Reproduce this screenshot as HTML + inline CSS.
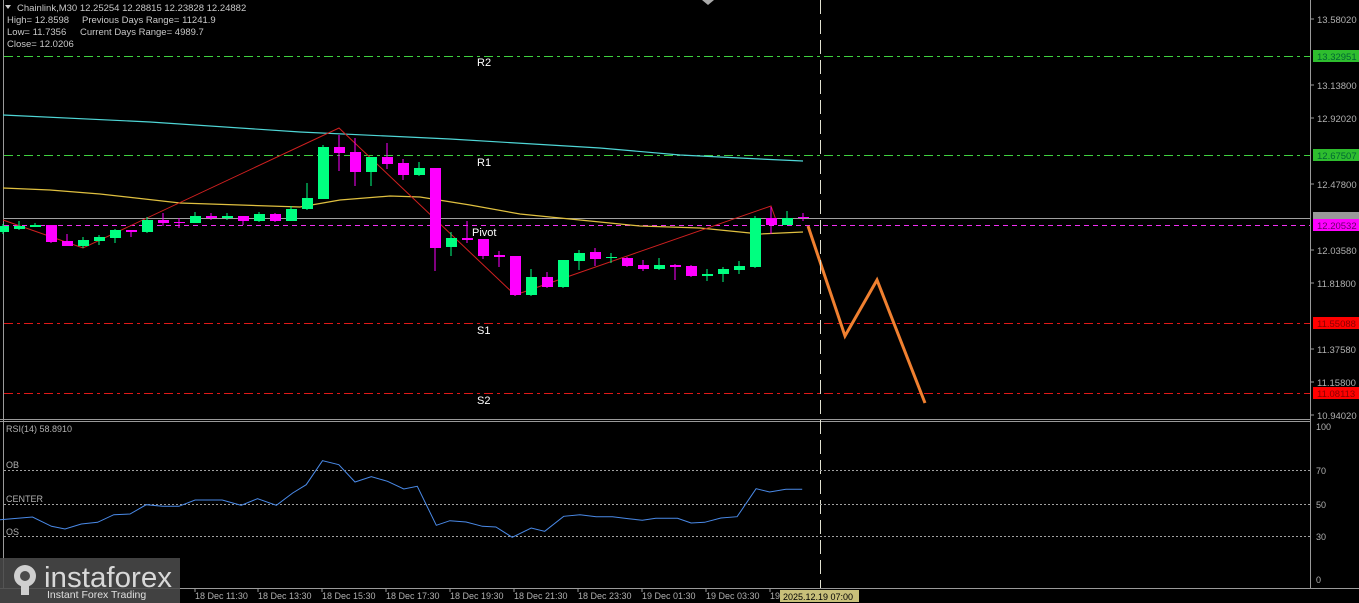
<!DOCTYPE html>
<html><head><meta charset="utf-8"><style>
html,body{margin:0;padding:0;background:#000;width:1359px;height:603px;overflow:hidden}
svg{display:block;font-family:"Liberation Sans",sans-serif}
</style></head><body>
<svg width="1359" height="603" viewBox="0 0 1359 603">
<rect width="1359" height="603" fill="#000"/>
<g shape-rendering="crispEdges">
<line x1="3.5" y1="0" x2="3.5" y2="588" stroke="#9a9a9a"/>
<line x1="1310.5" y1="0" x2="1310.5" y2="588" stroke="#9a9a9a"/>
<line x1="0" y1="419.5" x2="1310" y2="419.5" stroke="#9a9a9a"/>
<line x1="0" y1="421.5" x2="1310" y2="421.5" stroke="#9a9a9a"/>
<line x1="0" y1="588.5" x2="1359" y2="588.5" stroke="#9a9a9a"/>
<line x1="4" y1="56.5" x2="1310" y2="56.5" stroke="#3fd03f" stroke-dasharray="9,4,3,4"/>
<line x1="4" y1="155.5" x2="1310" y2="155.5" stroke="#3fd03f" stroke-dasharray="9,4,3,4"/>
<line x1="4" y1="218.5" x2="1310" y2="218.5" stroke="#a0a0a0"/>
<line x1="4" y1="225.5" x2="1310" y2="225.5" stroke="#f030f0" stroke-dasharray="5,4"/>
<line x1="4" y1="323.5" x2="1310" y2="323.5" stroke="#e01818" stroke-dasharray="9,4,3,4"/>
<line x1="4" y1="393.5" x2="1310" y2="393.5" stroke="#e01818" stroke-dasharray="9,4,3,4"/>
</g>
<g fill="#fff" font-size="11">
<text x="477" y="66">R2</text><text x="477" y="166">R1</text><text x="472" y="236">Pivot</text>
<text x="477" y="334">S1</text><text x="477" y="404">S2</text>
</g>
<polyline fill="none" stroke="#4fd6d6" stroke-width="1.2" points="3,115 150,122 300,132 450,139 600,148 680,155 760,159 803,161"/>
<polyline fill="none" stroke="#e0c040" stroke-width="1.2" points="3,188 50,190 100,194 180,203 300,207 340,200 390,196 420,197 470,205 520,214 560,218 640,226 700,228 760,234 803,232"/>
<polyline fill="none" stroke="#d02020" stroke-width="1" points="3,220 83,248 339,128 515,295 771,206 776,220"/>
<g stroke="#00ff80" stroke-width="1" shape-rendering="crispEdges">
<line x1="3" y1="224" x2="3" y2="234"/><line x1="19" y1="221" x2="19" y2="230"/><line x1="35" y1="223" x2="35" y2="227"/>
<line x1="83" y1="237" x2="83" y2="248"/><line x1="99" y1="235" x2="99" y2="245"/><line x1="115" y1="229" x2="115" y2="243"/>
<line x1="147" y1="217" x2="147" y2="233"/><line x1="195" y1="212" x2="195" y2="223"/><line x1="227" y1="213" x2="227" y2="220"/>
<line x1="259" y1="212" x2="259" y2="222"/><line x1="291" y1="206" x2="291" y2="221"/><line x1="307" y1="183" x2="307" y2="210"/>
<line x1="323" y1="145" x2="323" y2="199"/><line x1="371" y1="157" x2="371" y2="186"/><line x1="419" y1="162" x2="419" y2="176"/>
<line x1="451" y1="232" x2="451" y2="256"/><line x1="531" y1="269" x2="531" y2="296"/><line x1="563" y1="260" x2="563" y2="288"/>
<line x1="579" y1="250" x2="579" y2="270"/><line x1="611" y1="253" x2="611" y2="263"/><line x1="659" y1="258" x2="659" y2="270"/>
<line x1="707" y1="269" x2="707" y2="281"/><line x1="723" y1="267" x2="723" y2="282"/><line x1="739" y1="261" x2="739" y2="274"/>
<line x1="755" y1="216" x2="755" y2="268"/><line x1="787" y1="211" x2="787" y2="225"/>
</g>
<g stroke="#ff00ff" stroke-width="1" shape-rendering="crispEdges">
<line x1="51" y1="225" x2="51" y2="243"/><line x1="67" y1="234" x2="67" y2="246"/><line x1="131" y1="230" x2="131" y2="237"/>
<line x1="163" y1="213" x2="163" y2="226"/><line x1="179" y1="218" x2="179" y2="228"/><line x1="211" y1="213" x2="211" y2="220"/>
<line x1="243" y1="216" x2="243" y2="225"/><line x1="275" y1="213" x2="275" y2="222"/><line x1="339" y1="135" x2="339" y2="171"/>
<line x1="355" y1="138" x2="355" y2="186"/><line x1="387" y1="143" x2="387" y2="169"/><line x1="403" y1="159" x2="403" y2="180"/>
<line x1="435" y1="168" x2="435" y2="271"/><line x1="467" y1="221" x2="467" y2="243"/><line x1="483" y1="239" x2="483" y2="259"/>
<line x1="499" y1="251" x2="499" y2="267"/><line x1="515" y1="256" x2="515" y2="296"/><line x1="547" y1="272" x2="547" y2="288"/>
<line x1="595" y1="248" x2="595" y2="266"/><line x1="627" y1="257" x2="627" y2="267"/><line x1="643" y1="260" x2="643" y2="271"/>
<line x1="675" y1="264" x2="675" y2="280"/><line x1="691" y1="265" x2="691" y2="277"/><line x1="771" y1="207" x2="771" y2="234"/>
<line x1="803" y1="213" x2="803" y2="221"/>
</g>
<g fill="#00ff80">
<rect x="0" y="226" width="9" height="6"/><rect x="14" y="226" width="11" height="3"/><rect x="30" y="225" width="11" height="2"/>
<rect x="78" y="240" width="11" height="6"/><rect x="94" y="237" width="11" height="4"/><rect x="110" y="230" width="11" height="8"/>
<rect x="142" y="220" width="11" height="12"/><rect x="190" y="216" width="11" height="7"/><rect x="222" y="216" width="11" height="2"/>
<rect x="254" y="214" width="11" height="7"/><rect x="286" y="209" width="11" height="12"/><rect x="302" y="198" width="11" height="11"/>
<rect x="318" y="147" width="11" height="52"/><rect x="366" y="157" width="11" height="15"/><rect x="414" y="168" width="11" height="7"/>
<rect x="446" y="238" width="11" height="9"/><rect x="526" y="277" width="11" height="18"/><rect x="558" y="260" width="11" height="27"/>
<rect x="574" y="253" width="11" height="8"/><rect x="606" y="257" width="11" height="1"/><rect x="654" y="265" width="11" height="4"/>
<rect x="702" y="274" width="11" height="2"/><rect x="718" y="269" width="11" height="5"/><rect x="734" y="266" width="11" height="4"/>
<rect x="750" y="218" width="11" height="49"/><rect x="782" y="218" width="11" height="7"/>
</g>
<g fill="#ff00ff">
<rect x="46" y="225" width="11" height="17"/><rect x="62" y="241" width="11" height="5"/><rect x="126" y="230" width="11" height="2"/>
<rect x="158" y="220" width="11" height="3"/><rect x="174" y="222" width="11" height="1"/><rect x="206" y="216" width="11" height="2"/>
<rect x="238" y="216" width="11" height="5"/><rect x="270" y="214" width="11" height="7"/><rect x="334" y="147" width="11" height="6"/>
<rect x="350" y="152" width="11" height="20"/><rect x="382" y="157" width="11" height="7"/><rect x="398" y="163" width="11" height="12"/>
<rect x="430" y="168" width="11" height="80"/><rect x="462" y="238" width="11" height="2"/><rect x="478" y="239" width="11" height="17"/>
<rect x="494" y="255" width="11" height="2"/><rect x="510" y="256" width="11" height="39"/><rect x="542" y="277" width="11" height="10"/>
<rect x="590" y="252" width="11" height="7"/><rect x="622" y="258" width="11" height="8"/><rect x="638" y="265" width="11" height="4"/>
<rect x="670" y="265" width="11" height="2"/><rect x="686" y="266" width="11" height="10"/><rect x="766" y="218" width="11" height="7"/>
<rect x="798" y="217" width="11" height="1"/>
</g>
<polyline fill="none" stroke="#f08030" stroke-width="3" points="808,226 845,336 877,280 925,403"/>
<line x1="820.5" y1="0" x2="820.5" y2="588" stroke="#e0e0d0" stroke-dasharray="14,6" shape-rendering="crispEdges"/>
<polygon points="702,0 714,0 708,5" fill="#aaa"/>
<polygon points="5,5 11,5 8,9" fill="#ccc"/>
<g fill="#c8c8c8" font-size="9.5">
<text x="17" y="11">Chainlink,M30  12.25254 12.28815 12.23828 12.24882</text>
<text x="7" y="23">High= 12.8598</text><text x="82" y="23">Previous Days Range= 11241.9</text>
<text x="7" y="35">Low= 11.7356</text><text x="80" y="35">Current Days Range= 4989.7</text>
<text x="7" y="47">Close= 12.0206</text>
</g>
<g stroke="#9a9a9a" shape-rendering="crispEdges"><line x1="1310" y1="19" x2="1314" y2="19"/><line x1="1310" y1="85" x2="1314" y2="85"/><line x1="1310" y1="118" x2="1314" y2="118"/><line x1="1310" y1="184" x2="1314" y2="184"/><line x1="1310" y1="250" x2="1314" y2="250"/><line x1="1310" y1="283" x2="1314" y2="283"/><line x1="1310" y1="349" x2="1314" y2="349"/><line x1="1310" y1="382" x2="1314" y2="382"/><line x1="1310" y1="415" x2="1314" y2="415"/></g>
<g fill="#b0b0b0" font-size="9.5">
<text x="1317" y="23">13.58020</text><text x="1317" y="89">13.13800</text><text x="1317" y="122">12.92020</text>
<text x="1317" y="188">12.47800</text><text x="1317" y="254">12.03580</text><text x="1317" y="287">11.81800</text>
<text x="1317" y="353">11.37580</text><text x="1317" y="386">11.15800</text><text x="1317" y="419">10.94020</text>
</g>
<rect x="1313" y="50" width="46" height="12" fill="#2ebd2e"/><text x="1317" y="60" fill="#063" font-size="9.5">13.32951</text>
<rect x="1313" y="149" width="46" height="12" fill="#2ebd2e"/><text x="1317" y="159" fill="#063" font-size="9.5">12.67507</text>
<rect x="1313" y="212" width="46" height="7" fill="#999"/>
<rect x="1313" y="219" width="46" height="12" fill="#ff00ff"/><text x="1317" y="229" fill="#606" font-size="9.5">12.20532</text>
<rect x="1313" y="317" width="46" height="12" fill="#ff0000"/><text x="1317" y="327" fill="#800" font-size="9.5">11.55088</text>
<rect x="1313" y="387" width="46" height="12" fill="#ff0000"/><text x="1317" y="397" fill="#800" font-size="9.5">11.08113</text>
<g stroke="#a0a0a0" stroke-dasharray="2,2" shape-rendering="crispEdges"><line x1="4" y1="470.5" x2="1310" y2="470.5"/><line x1="4" y1="504.5" x2="1310" y2="504.5"/><line x1="4" y1="536.5" x2="1310" y2="536.5"/></g>
<polyline fill="none" stroke="#4a8ae8" stroke-width="1" points="0,519.7 32.5,517 51.5,526.3 65,529 81.3,524 97.6,522.3 113.8,514.7 130,514 146.3,504.7 162.6,506.3 178.9,506.3 195.1,500 222.2,500 241.2,505.3 257.5,498.7 276.4,505.3 292.7,493 306.2,484.7 322.5,460.7 338.8,464.7 355,482 371.3,476.7 387.5,481.3 403.8,489 417.3,486.3 436.3,525.3 449.9,520.7 466.1,522 482.4,526.3 495.9,527 512.2,537.3 531.2,528 544.7,531.3 563.7,516.3 580,514.7 596.2,516.7 612.5,516.7 628.7,518.7 642.3,520.3 655.8,518.3 677.5,518.3 691.1,523 704.6,522.3 720.9,518 737.1,516.7 756.1,488.7 769.6,492 785.9,489.3 802.2,489.3"/>
<g fill="#b0b0b0" font-size="9">
<text x="6" y="432">RSI(14) 58.8910</text><text x="6" y="468">OB</text><text x="6" y="502">CENTER</text><text x="6" y="535">OS</text>
<text x="1316" y="430">100</text><text x="1316" y="474">70</text><text x="1316" y="508">50</text><text x="1316" y="540">30</text><text x="1316" y="583">0</text>
</g>
<g stroke="#9a9a9a" shape-rendering="crispEdges"><line x1="195" y1="588" x2="195" y2="592"/><line x1="258" y1="588" x2="258" y2="592"/><line x1="322" y1="588" x2="322" y2="592"/><line x1="386" y1="588" x2="386" y2="592"/><line x1="450" y1="588" x2="450" y2="592"/><line x1="514" y1="588" x2="514" y2="592"/><line x1="578" y1="588" x2="578" y2="592"/><line x1="642" y1="588" x2="642" y2="592"/><line x1="706" y1="588" x2="706" y2="592"/><line x1="770" y1="588" x2="770" y2="592"/></g>
<g fill="#b0b0b0" font-size="9">
<text x="195" y="599">18 Dec 11:30</text><text x="258" y="599">18 Dec 13:30</text><text x="322" y="599">18 Dec 15:30</text>
<text x="386" y="599">18 Dec 17:30</text><text x="450" y="599">18 Dec 19:30</text><text x="514" y="599">18 Dec 21:30</text>
<text x="578" y="599">18 Dec 23:30</text><text x="642" y="599">19 Dec 01:30</text><text x="706" y="599">19 Dec 03:30</text>
<text x="770" y="599">19</text>
</g>
<rect x="780" y="590" width="79" height="12" fill="#c8c07a"/><text x="783" y="600" fill="#000" font-size="9">2025.12.19 07:00</text>
<rect x="0" y="558" width="180" height="45" fill="#4a4a4a" opacity="0.88"/>
<g fill="#cfcfcf">
<circle cx="25" cy="576" r="11"/>
<circle cx="25" cy="576" r="5" fill="#4a4a4a"/>
<rect x="21" y="583" width="8" height="12"/>
</g>
<text x="44" y="587" fill="#d8d8d8" font-size="29" textLength="128" lengthAdjust="spacingAndGlyphs">instaforex</text>
<text x="47" y="598" fill="#e0e0e0" font-size="10.5">Instant Forex Trading</text>
</svg>
</body></html>
